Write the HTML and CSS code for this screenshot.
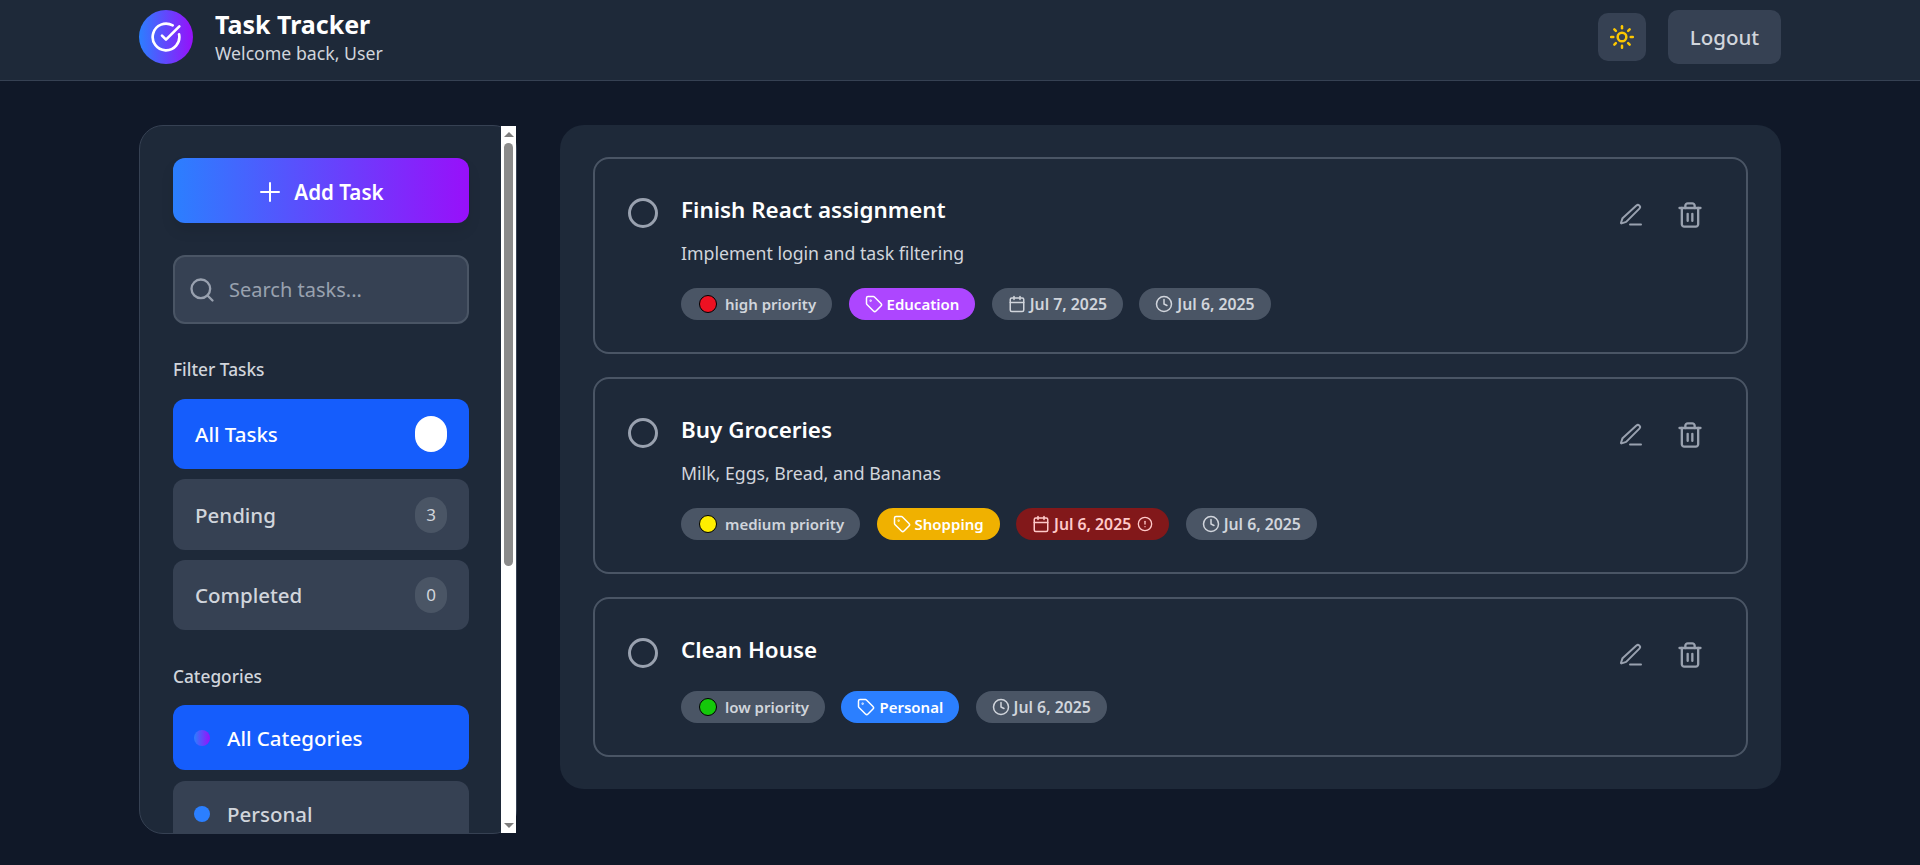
FILE: index.html
```html
<!DOCTYPE html>
<html lang="en">
<head>
<meta charset="utf-8">
<title>Task Tracker</title>
<link rel="stylesheet" href="styles.css">
</head>
<body>
<header class="topbar">
  <div class="brand">
    <div class="logo">
      <svg class="ico" width="32" height="32" viewBox="0 0 24 24"><path d="M21.801 10A10 10 0 1 1 17 3.335"/><path d="m9 11 3 3L22 4"/></svg>
    </div>
    <div>
      <h1 class="brand-title">Task Tracker</h1>
      <p class="brand-sub">Welcome back, User</p>
    </div>
  </div>
  <div class="top-actions">
    <button class="theme-btn" type="button">
      <svg class="ico sun" width="26" height="26" viewBox="0 0 24 24"><circle cx="12" cy="12" r="4"/><path d="M12 2v2"/><path d="M12 20v2"/><path d="m4.93 4.93 1.41 1.41"/><path d="m17.66 17.66 1.41 1.41"/><path d="M2 12h2"/><path d="M20 12h2"/><path d="m6.34 17.66-1.41 1.41"/><path d="m19.07 4.93-1.41 1.41"/></svg>
    </button>
    <button class="logout-btn" type="button">Logout</button>
  </div>
</header>

<div class="layout">
  <div class="sidebar-wrap">
    <aside class="sidebar">
      <button class="add-btn" type="button">
        <svg class="ico" width="24" height="24" viewBox="0 0 24 24"><path d="M12 3v18"/><path d="M3 12h18"/></svg>
        <span>Add Task</span>
      </button>
      <div class="search">
        <svg class="ico" width="28" height="28" viewBox="0 0 24 24"><circle cx="11" cy="11" r="8"/><path d="m21 21-4.3-4.3"/></svg>
        <span>Search tasks...</span>
      </div>

      <h2 class="side-label first">Filter Tasks</h2>
      <div class="filter-list">
        <div class="filter active"><span>All Tasks</span><span class="count"></span></div>
        <div class="filter"><span>Pending</span><span class="count">3</span></div>
        <div class="filter"><span>Completed</span><span class="count">0</span></div>
      </div>

      <h2 class="side-label">Categories</h2>
      <div class="cat-list">
        <div class="cat active"><span class="cat-dot all"></span>All Categories</div>
        <div class="cat"><span class="cat-dot personal"></span>Personal</div>
      </div>
    </aside>
    <div class="scrollbar">
      <span class="arrow up"></span>
      <span class="thumb"></span>
      <span class="arrow down"></span>
    </div>
  </div>

  <main class="board">
    <article class="task">
      <span class="check"></span>
      <div class="task-body">
        <h3 class="task-title">Finish React assignment</h3>
        <p class="task-desc">Implement login and task filtering</p>
        <div class="chips">
          <span class="chip"><span class="pri high"></span>high priority</span>
          <span class="chip tag-education">
            <svg class="ico" width="18" height="18" viewBox="0 0 24 24"><path d="M12.586 2.586A2 2 0 0 0 11.172 2H4a2 2 0 0 0-2 2v7.172a2 2 0 0 0 .586 1.414l8.704 8.704a2.426 2.426 0 0 0 3.42 0l6.58-6.58a2.426 2.426 0 0 0 0-3.42z"/><circle cx="7.5" cy="7.5" r=".5"/></svg>
            Education</span>
          <span class="chip date">
            <svg class="ico" width="18" height="18" viewBox="0 0 24 24"><path d="M8 2v4"/><path d="M16 2v4"/><rect width="18" height="18" x="3" y="4" rx="2"/><path d="M3 10h18"/></svg>
            Jul 7, 2025</span>
          <span class="chip date">
            <svg class="ico" width="18" height="18" viewBox="0 0 24 24"><circle cx="12" cy="12" r="10"/><path d="M12 6v6l4 2"/></svg>
            Jul 6, 2025</span>
        </div>
      </div>
      <div class="task-actions">
        <button class="icon-btn" type="button"><svg class="ico" width="24" height="24" viewBox="0 0 24 24"><path d="M11 21.5h11"/><path d="M17.4 2.6a2.1 2.1 0 0 1 3 3L7.4 18.6a2 2 0 0 1-.9.5l-3.9 1.3a.5.5 0 0 1-.6-.6l1.3-3.9a2 2 0 0 1 .5-.9z"/></svg></button>
        <button class="icon-btn" type="button"><svg class="ico" width="28" height="28" viewBox="0 0 24 24"><path d="M3 6h18"/><path d="M19 6v14c0 1-1 2-2 2H7c-1 0-2-1-2-2V6"/><path d="M8 6V4c0-1 1-2 2-2h4c1 0 2 1 2 2v2"/><path d="M10 11v6"/><path d="M14 11v6"/></svg></button>
      </div>
    </article>

    <article class="task">
      <span class="check"></span>
      <div class="task-body">
        <h3 class="task-title">Buy Groceries</h3>
        <p class="task-desc">Milk, Eggs, Bread, and Bananas</p>
        <div class="chips">
          <span class="chip"><span class="pri medium"></span>medium priority</span>
          <span class="chip tag-shopping">
            <svg class="ico" width="18" height="18" viewBox="0 0 24 24"><path d="M12.586 2.586A2 2 0 0 0 11.172 2H4a2 2 0 0 0-2 2v7.172a2 2 0 0 0 .586 1.414l8.704 8.704a2.426 2.426 0 0 0 3.42 0l6.58-6.58a2.426 2.426 0 0 0 0-3.42z"/><circle cx="7.5" cy="7.5" r=".5"/></svg>
            Shopping</span>
          <span class="chip date overdue">
            <svg class="ico" width="18" height="18" viewBox="0 0 24 24"><path d="M8 2v4"/><path d="M16 2v4"/><rect width="18" height="18" x="3" y="4" rx="2"/><path d="M3 10h18"/></svg>
            Jul 6, 2025
            <svg class="ico alert" width="16" height="16" viewBox="0 0 24 24"><circle cx="12" cy="12" r="10"/><path d="M12 8v4"/><path d="M12 16h.01"/></svg></span>
          <span class="chip date">
            <svg class="ico" width="18" height="18" viewBox="0 0 24 24"><circle cx="12" cy="12" r="10"/><path d="M12 6v6l4 2"/></svg>
            Jul 6, 2025</span>
        </div>
      </div>
      <div class="task-actions">
        <button class="icon-btn" type="button"><svg class="ico" width="24" height="24" viewBox="0 0 24 24"><path d="M11 21.5h11"/><path d="M17.4 2.6a2.1 2.1 0 0 1 3 3L7.4 18.6a2 2 0 0 1-.9.5l-3.9 1.3a.5.5 0 0 1-.6-.6l1.3-3.9a2 2 0 0 1 .5-.9z"/></svg></button>
        <button class="icon-btn" type="button"><svg class="ico" width="28" height="28" viewBox="0 0 24 24"><path d="M3 6h18"/><path d="M19 6v14c0 1-1 2-2 2H7c-1 0-2-1-2-2V6"/><path d="M8 6V4c0-1 1-2 2-2h4c1 0 2 1 2 2v2"/><path d="M10 11v6"/><path d="M14 11v6"/></svg></button>
      </div>
    </article>

    <article class="task">
      <span class="check"></span>
      <div class="task-body">
        <h3 class="task-title">Clean House</h3>
        <div class="chips">
          <span class="chip"><span class="pri low"></span>low priority</span>
          <span class="chip tag-personal">
            <svg class="ico" width="18" height="18" viewBox="0 0 24 24"><path d="M12.586 2.586A2 2 0 0 0 11.172 2H4a2 2 0 0 0-2 2v7.172a2 2 0 0 0 .586 1.414l8.704 8.704a2.426 2.426 0 0 0 3.42 0l6.58-6.58a2.426 2.426 0 0 0 0-3.42z"/><circle cx="7.5" cy="7.5" r=".5"/></svg>
            Personal</span>
          <span class="chip date">
            <svg class="ico" width="18" height="18" viewBox="0 0 24 24"><circle cx="12" cy="12" r="10"/><path d="M12 6v6l4 2"/></svg>
            Jul 6, 2025</span>
        </div>
      </div>
      <div class="task-actions">
        <button class="icon-btn" type="button"><svg class="ico" width="24" height="24" viewBox="0 0 24 24"><path d="M11 21.5h11"/><path d="M17.4 2.6a2.1 2.1 0 0 1 3 3L7.4 18.6a2 2 0 0 1-.9.5l-3.9 1.3a.5.5 0 0 1-.6-.6l1.3-3.9a2 2 0 0 1 .5-.9z"/></svg></button>
        <button class="icon-btn" type="button"><svg class="ico" width="28" height="28" viewBox="0 0 24 24"><path d="M3 6h18"/><path d="M19 6v14c0 1-1 2-2 2H7c-1 0-2-1-2-2V6"/><path d="M8 6V4c0-1 1-2 2-2h4c1 0 2 1 2 2v2"/><path d="M10 11v6"/><path d="M14 11v6"/></svg></button>
      </div>
    </article>
  </main>
</div>
</body>
</html>
```

FILE: styles.css
```css
* { box-sizing: border-box; }
html, body { height: 100%; }
body {
  margin: 0;
  overflow: hidden;
  background: #101828;
  color: #fff;
  font-family: "Noto Sans", "Open Sans", sans-serif;
}
h1, h2, h3, p { margin: 0; }
button { font-family: inherit; border: none; cursor: pointer; }
.ico {
  flex: none;
  fill: none;
  stroke: currentColor;
  stroke-width: 2;
  stroke-linecap: round;
  stroke-linejoin: round;
}

/* top bar */
.topbar {
  display: flex;
  justify-content: space-between;
  height: 81px;
  padding: 10px 139px 0;
  background: #1e2939;
  border-bottom: 1px solid #364153;
}
.brand { display: flex; gap: 22px; }
.logo {
  display: flex;
  align-items: center;
  justify-content: center;
  width: 54px;
  height: 54px;
  border-radius: 50%;
  background: linear-gradient(to right, #2b7fff, #9810fa);
}
.brand-title { font-size: 25px; line-height: 32px; font-weight: 700; margin-top: -2px; }
.brand-sub { font-size: 17.7px; line-height: 26px; color: #d1d5dc; }
.top-actions { display: flex; align-items: center; gap: 22px; height: 54px; }
.theme-btn {
  display: flex;
  align-items: center;
  justify-content: center;
  width: 48px;
  height: 48px;
  padding: 0;
  border-radius: 10px;
  background: #364153;
  color: #fdc700;
}
.sun { stroke-width: 2.3; }
.logout-btn {
  width: 113px;
  height: 54px;
  border-radius: 10px;
  background: #364153;
  color: #d1d5dc;
  font-size: 20.5px;
  font-weight: 500;
}

/* page columns */
.layout {
  display: flex;
  align-items: flex-start;
  gap: 43px;
  padding: 44px 139px 0;
}

/* sidebar */
.sidebar-wrap {
  position: relative;
  flex: none;
  width: 378px;
  height: 709px;
}
.sidebar {
  height: 100%;
  overflow: hidden;
  padding: 32px 47px 0 33px;
  background: #1e2939;
  border: 1px solid #364153;
  border-radius: 24px;
}
.scrollbar {
  position: absolute;
  top: 1px;
  right: 1px;
  bottom: 1px;
  display: flex;
  flex-direction: column;
  align-items: center;
  width: 15px;
  background: #fff;
}
.thumb {
  width: 9px;
  height: 423px;
  margin-top: 6px;
  border-radius: 5px;
  background: #8b8b8b;
}
.arrow {
  width: 0;
  height: 0;
  border-left: 5px solid transparent;
  border-right: 5px solid transparent;
}
.arrow.up { margin-top: 6px; border-bottom: 5px solid #7d7d7d; }
.arrow.down { margin-top: auto; margin-bottom: 5px; border-top: 5px solid #7d7d7d; }
.add-btn {
  display: flex;
  align-items: center;
  justify-content: center;
  gap: 12px;
  width: 100%;
  height: 65px;
  padding: 2px 0 0;
  border-radius: 12px;
  background: linear-gradient(to right, #2b7fff, #9810fa);
  color: #fff;
  font-size: 20.6px;
  font-weight: 600;
  box-shadow: 0 8px 14px rgba(0, 0, 0, .08);
}
.search {
  display: flex;
  align-items: center;
  gap: 13px;
  height: 69px;
  margin-top: 32px;
  padding: 0 13px;
  background: #364153;
  border: 2px solid #4a5565;
  border-radius: 12px;
  color: #99a1af;
  font-size: 20px;
}
.side-label {
  margin: 33px 0 14px;
  font-size: 17.3px;
  line-height: 28px;
  font-weight: 500;
  color: #d1d5dc;
}
.side-label.first { margin: 32px 0 15px; }
.filter-list { display: flex; flex-direction: column; gap: 10px; }
.filter {
  display: flex;
  align-items: center;
  justify-content: space-between;
  height: 70.4px;
  padding: 0 22px;
  border-radius: 12px;
  background: #364153;
  color: #d1d5dc;
  font-size: 20.5px;
  font-weight: 500;
}
.filter.active, .cat.active { background: #155dfc; color: #fff; }
.count {
  display: flex;
  align-items: center;
  justify-content: center;
  width: 32px;
  height: 36px;
  border-radius: 16px;
  background: #4a5565;
  font-size: 17px;
  font-weight: 400;
}
.filter.active .count { background: #fff; }
.cat-list { display: flex; flex-direction: column; gap: 11px; }
.cat {
  display: flex;
  align-items: center;
  gap: 17px;
  height: 65px;
  padding: 0 21px;
  border-radius: 12px;
  background: #364153;
  color: #d1d5dc;
  font-size: 20.5px;
  font-weight: 500;
}
.cat-dot { width: 16px; height: 16px; border-radius: 50%; }
.cat-dot.all { background: linear-gradient(to right, #2b7fff, #9810fa); }
.cat-dot.personal { background: #2b7fff; }

/* task board */
.board {
  flex: 1;
  display: flex;
  flex-direction: column;
  gap: 22.8px;
  padding: 32px 33px;
  background: #1e2939;
  border-radius: 24px;
}
.task {
  display: flex;
  padding: 32px 0 32px 33px;
  border: 2px solid #4a5565;
  border-radius: 16px;
}
.check {
  flex: none;
  width: 30px;
  height: 30px;
  margin-top: 7px;
  border: 3px solid #99a1af;
  border-radius: 50%;
}
.task-body { flex: 1; margin-left: 23px; }
.task-title { font-size: 22.4px; line-height: 38px; padding-bottom: 2px; font-weight: 600; }
.task-desc { margin-top: 8px; font-size: 17.7px; line-height: 28.8px; color: #d1d5dc; }
.chips { display: flex; gap: 16.4px; margin-top: 20px; }
.chip {
  display: inline-flex;
  align-items: center;
  gap: 4px;
  height: 32.4px;
  padding: 0 16px;
  border-radius: 17px;
  background: #4a5565;
  color: #d1d5dc;
  font-size: 15px;
  font-weight: 600;
}
.chip.date { font-size: 15.8px; }
.alert { margin-left: 2px; }
.pri {
  width: 18px;
  height: 18px;
  margin: 0 4px 0 2px;
  border: 1px solid #000;
  border-radius: 50%;
}
.pri.high { background: #ee1122; }
.pri.medium { background: #ffee00; }
.pri.low { background: #14c80a; }
.tag-education { background: #ad46ff; color: #fff; }
.tag-shopping { background: #f0b100; color: #fff; }
.tag-personal { background: #2b7fff; color: #fff; }
.chip.overdue { background: #82181a; color: #ffc9c9; }
.task-actions { flex: none; display: flex; gap: 11px; height: 48px; margin-right: 32px; }
.icon-btn {
  display: flex;
  align-items: center;
  justify-content: center;
  width: 48px;
  height: 48px;
  padding: 0;
  background: none;
  color: #99a1af;
}
```
